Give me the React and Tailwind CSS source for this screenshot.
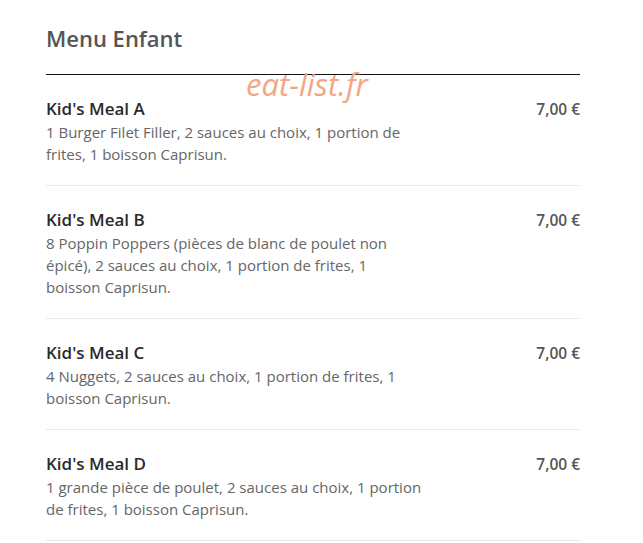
const items = [
  {
    name: "Kid's Meal A",
    desc: "1 Burger Filet Filler, 2 sauces au choix, 1 portion de frites, 1 boisson Caprisun.",
    price: "7,00 €",
  },
  {
    name: "Kid's Meal B",
    desc: "8 Poppin Poppers (pièces de blanc de poulet non épicé), 2 sauces au choix, 1 portion de frites, 1 boisson Caprisun.",
    price: "7,00 €",
  },
  {
    name: "Kid's Meal C",
    desc: "4 Nuggets, 2 sauces au choix, 1 portion de frites, 1 boisson Caprisun.",
    price: "7,00 €",
  },
  {
    name: "Kid's Meal D",
    desc: "1 grande pièce de poulet, 2 sauces au choix, 1 portion de frites, 1 boisson Caprisun.",
    price: "7,00 €",
  },
];

export default function App() {
  return (
    <div className="min-h-[543px] bg-white font-['Open_Sans',sans-serif]">
      <div className="relative ml-[46px] w-[534px] pt-[23px]">
        <h2 className="border-b border-[#111] pb-[21px] text-[22px] leading-[30px] font-semibold text-[#555]">
          Menu Enfant
        </h2>

        {/* watermark */}
        <span className="absolute left-[200px] top-[64px] text-[31px] leading-[40px] italic text-[#f3a584]">
          eat-list.fr
        </span>

        <ul>
          {items.map((item) => (
            <li
              key={item.name}
              className="flex justify-between border-b border-[#e8e8e8] pt-[22px] pb-[20px]"
            >
              <div className="w-[378px]">
                <h3 className="text-[17px] leading-[24px] font-semibold text-[#2a2a2a]">
                  {item.name}
                </h3>
                <p className="text-[15px] leading-[22px] text-[#666]">{item.desc}</p>
              </div>
              <div className="text-[15.5px] leading-[24px] font-semibold text-[#555]">
                {item.price}
              </div>
            </li>
          ))}
        </ul>
      </div>
    </div>
  );
}
